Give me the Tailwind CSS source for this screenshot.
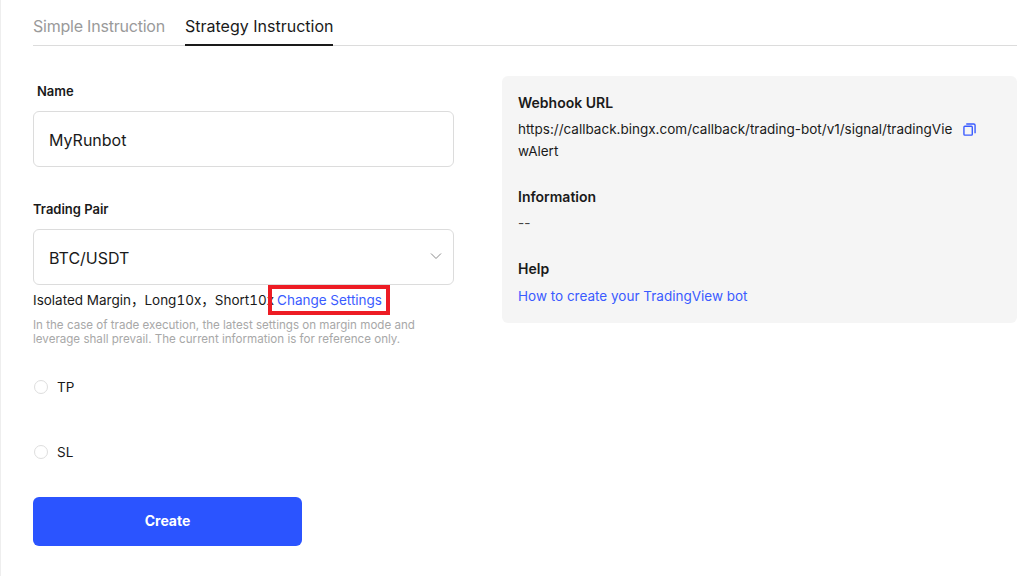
<!DOCTYPE html>
<html lang="en">
<head>
<meta charset="UTF-8">
<title>Strategy Instruction</title>
<script src="https://cdn.jsdelivr.net/npm/@tailwindcss/browser@4"></script>
</head>
<body class="bg-white font-['Inter','Noto_Sans_CJK_SC',sans-serif] text-[#1a1a1a] overflow-hidden">
<div class="w-[1022px] h-[576px] border-l border-[#eeeeee] pl-[32px] pr-[5px]">
  <!-- tabs -->
  <div class="flex h-[46px] border-b border-[#dcdcdc] gap-[20px] text-[16px]">
    <div class="pt-[14px] leading-[24px] text-[#9a9a9a] w-[132px] tracking-[-0.22px] whitespace-nowrap">Simple Instruction</div>
    <div class="pt-[14px] leading-[24px] h-[46px] border-b-2 border-[#1a1a1a]">Strategy Instruction</div>
  </div>

  <div class="flex mt-[30px]">
    <!-- form -->
    <div class="w-[421px] shrink-0">
      <div class="pl-[4px] h-[30px] text-[13px] leading-[30px] font-semibold">Name</div>
      <div class="mt-[5px] h-[56px] border border-[#dcdcdc] rounded-[6px] px-[15px] pt-[2px] flex items-center text-[16px]">MyRunbot</div>

      <div class="mt-[27px] h-[30px] text-[13px] leading-[30px] font-semibold">Trading Pair</div>
      <div class="mt-[5px] h-[56px] border border-[#dcdcdc] rounded-[6px] pl-[15px] pr-[11px] pt-[2px] flex items-center justify-between text-[16px]">
        <span>BTC/USDT</span>
        <svg class="mb-[4px]" width="12" height="12" viewBox="0 0 12 12" fill="none" stroke="#8a8a8a" stroke-width="1"><path d="M1 3.5 6 8.5 11 3.5"/></svg>
      </div>

      <div class="relative mt-[3px] h-[24px] flex items-center text-[13.5px] tabular-nums whitespace-nowrap">
        <span>Isolated Margin，Long10x，Short10x</span>
        <span class="ml-[3px] text-[#3a5bff]">Change Settings</span>
        <div class="absolute left-[235px] top-[-3px] w-[122px] h-[30px] border-4 border-[#ed1c24]"></div>
      </div>
      <p class="mt-[6px] w-[390px] text-[11.6px] leading-[14px] text-[#a8a8a8]">In the case of trade execution, the latest settings on margin mode and leverage shall prevail. The current information is for reference only.</p>

      <div class="mt-[31px] flex items-center h-[20px] gap-[9px] text-[13.5px]">
        <span class="ml-[1px] w-[14px] h-[14px] rounded-full border border-[#dedede]"></span>TP
      </div>
      <div class="mt-[45px] flex items-center h-[20px] gap-[9px] text-[13.5px]">
        <span class="ml-[1px] w-[14px] h-[14px] rounded-full border border-[#dedede]"></span>SL
      </div>

      <button class="mt-[35px] w-[269px] h-[49px] pb-[2px] rounded-[6px] bg-[#2b54ff] text-white text-[14px] font-bold">Create</button>
    </div>

    <!-- info panel -->
    <div class="ml-[48px] w-[515px] h-[247px] rounded-[6px] bg-[#f5f5f5] pl-[16px] pt-[17px] text-[13.5px]">
      <div class="font-semibold leading-[20px] text-[14px]">Webhook URL</div>
      <div class="mt-[5px] flex items-start">
        <div class="w-[440px] leading-[22px] break-all">https://callback.bingx.com/callback/trading-bot/v1/signal/tradingViewAlert</div>
        <svg class="mt-[5px] ml-[5px]" width="13" height="13" viewBox="0 0 14 14" fill="none" stroke="#3a5bff" stroke-width="1.5"><rect x="1" y="3.5" width="9" height="9.5" rx="1"/><path d="M3.5 1h8a1.5 1.5 0 0 1 1.5 1.5V11"/></svg>
      </div>
      <div class="mt-[25px] font-semibold leading-[20px] text-[14px]">Information</div>
      <div class="mt-[5px] leading-[22px] text-[#444444]">--</div>
      <div class="mt-[25px] font-semibold leading-[20px] text-[14px]">Help</div>
      <div class="mt-[6px] leading-[22px] text-[#3a5bff]">How to create your TradingView bot</div>
    </div>
  </div>
</div>
</body>
</html>
